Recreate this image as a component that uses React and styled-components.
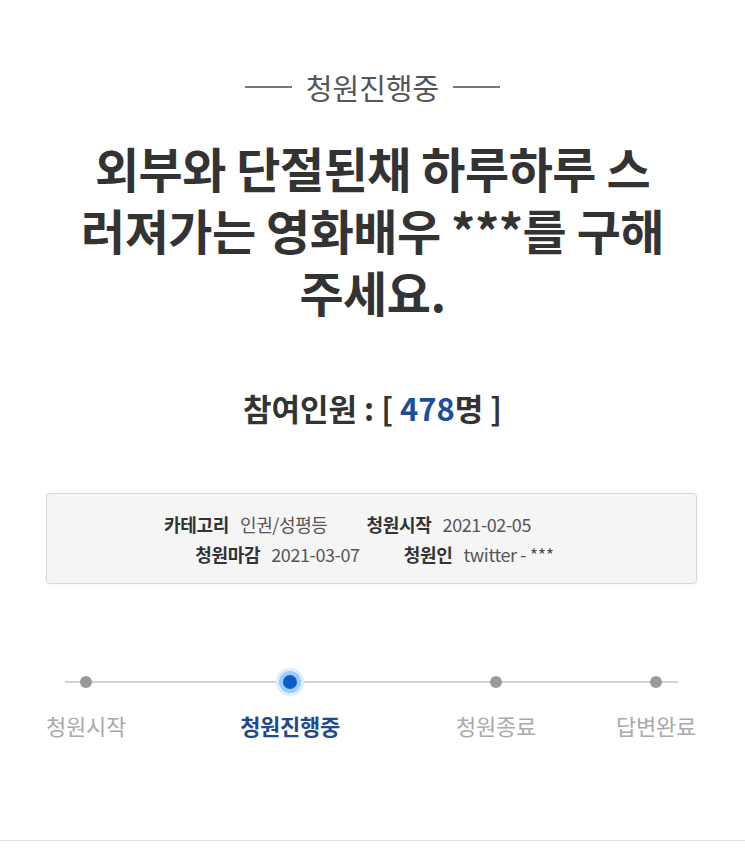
import React from 'react'
import styled, { createGlobalStyle } from 'styled-components';

const GlobalStyle = createGlobalStyle`
  html, body {
    margin: 0;
    padding: 0;
    background: #fff;
  }
  body {
    font-family: "Noto Sans CJK KR", "Noto Sans", sans-serif;
    color: #333;
  }
`;

const Page = styled.div`
  width: 745px;
  min-height: 858px;
  padding-top: 69px;
  box-sizing: border-box;
  display: flex;
  flex-direction: column;
`;

const Status = styled.div`
  display: flex;
  align-items: center;
  justify-content: center;
  gap: 14px;
  height: 36px;
  font-size: 29px;
  line-height: 36px;
  color: #555;
  &::before, &::after {
    content: '';
    width: 47px;
    height: 1.5px;
    background: #777;
  }
`;

const Title = styled.h1`
  width: 592px;
  margin: 31px auto 0;
  font-size: 48px;
  line-height: 62px;
  font-weight: 700;
  color: #333;
  text-align: center;
  letter-spacing: -0.5px;
`;

const Count = styled.div`
  margin-top: 66px;
  font-size: 31px;
  line-height: 40px;
  font-weight: 700;
  color: #333;
  text-align: center;
  span {
    color: #1b4f9c;
  }
`;

const InfoBox = styled.div`
  margin: 65px 48px 0 46px;
  padding: 15px 0 14px;
  background: #f5f5f5;
  border: 1px solid #d8d8d8;
  border-radius: 4px;
  box-shadow: 0 0 2px rgba(0, 0, 0, 0.08);
`;

const InfoRow = styled.div`
  display: flex;
  justify-content: center;
  gap: ${p => p.$gap || 39}px;
  height: 30px;
  line-height: 30px;
  font-size: 18px;
  padding-left: ${p => Math.max(0, p.$shift || 0)}px;
  padding-right: ${p => Math.max(0, -(p.$shift || 0))}px;
`;

const InfoItem = styled.div`
  display: flex;
  gap: 11px;
  b {
    font-weight: 700;
    color: #333;
    letter-spacing: -0.3px;
  }
  span {
    color: #555;
    letter-spacing: -0.4px;
  }
`;

const Steps = styled.div`
  position: relative;
  margin-top: 86px;
  padding-left: 6px;
  display: grid;
  grid-template-columns: 160px 248px 164px 156px;
  &::before {
    content: '';
    position: absolute;
    left: 65px;
    width: 613px;
    top: 11px;
    height: 2px;
    background: #d4d4d4;
  }
`;

const Step = styled.div`
  position: relative;
  display: flex;
  flex-direction: column;
  align-items: center;
`;

const DotWrap = styled.div`
  height: 24px;
  display: flex;
  align-items: center;
  justify-content: center;
`;

const Dot = styled.div`
  width: ${p => (p.$active ? 14 : 12)}px;
  height: ${p => (p.$active ? 14 : 12)}px;
  border-radius: 50%;
  background: ${p => (p.$active ? '#0a5cc7' : '#999')};
  box-shadow: ${p => (p.$active ? '0 0 0 4px #9cccff, 0 0 0 7px #dcedff' : 'none')};
`;

const StepLabel = styled.div`
  margin-top: 16px;
  font-size: 22px;
  line-height: 30px;
  font-weight: ${p => (p.$active ? 700 : 400)};
  color: ${p => (p.$active ? '#1f4a8c' : '#aaa')};
  letter-spacing: -0.3px;
`;

const Divider = styled.div`
  margin-top: auto;
  margin-bottom: 17px;
  height: 1px;
  background: #e2e2e2;
`;

const steps = [
  { label: '청원시작' },
  { label: '청원진행중', active: true },
  { label: '청원종료' },
  { label: '답변완료' },
];

export default function App() {
  return (
    <>
      <GlobalStyle />
      <Page>
        <Status>청원진행중</Status>
        <Title>외부와 단절된채 하루하루 스러져가는 영화배우 ***를 구해 주세요.</Title>
        <Count>참여인원 : [ <span>478</span>명 ]</Count>
        <InfoBox>
          <InfoRow $shift={-48}>
            <InfoItem><b>카테고리</b><span>인권/성평등</span></InfoItem>
            <InfoItem><b>청원시작</b><span>2021-02-05</span></InfoItem>
          </InfoRow>
          <InfoRow $shift={6} $gap={44}>
            <InfoItem><b>청원마감</b><span>2021-03-07</span></InfoItem>
            <InfoItem><b>청원인</b><span>twitter - ***</span></InfoItem>
          </InfoRow>
        </InfoBox>
        <Steps>
          {steps.map(s => (
            <Step key={s.label}>
              <DotWrap><Dot $active={s.active} /></DotWrap>
              <StepLabel $active={s.active}>{s.label}</StepLabel>
            </Step>
          ))}
        </Steps>
        <Divider />
      </Page>
    </>
  )
}
